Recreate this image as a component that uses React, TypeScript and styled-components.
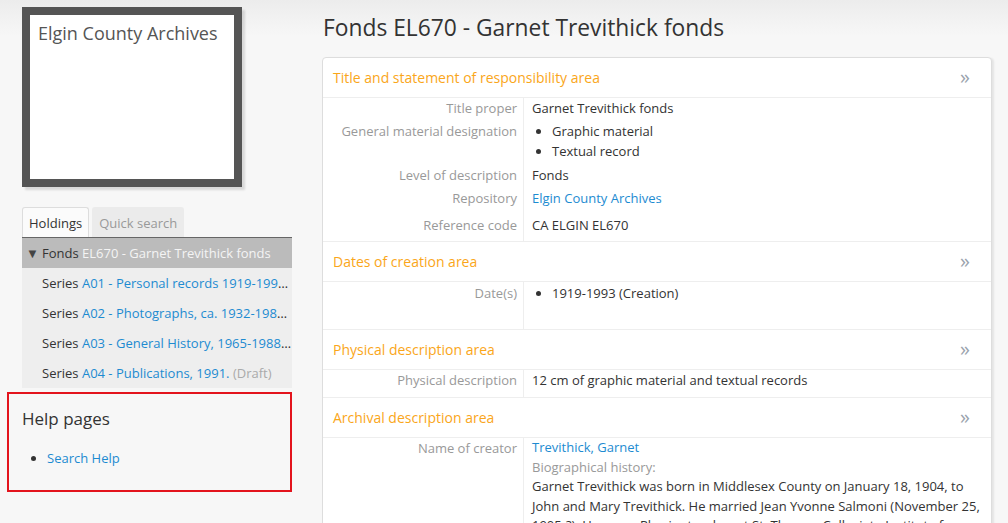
import React from 'react';
import styled, { createGlobalStyle } from 'styled-components';

const GlobalStyle = createGlobalStyle`
    html, body {
        margin: 0;
        padding: 0;
    }
    body {
        background: linear-gradient(#ececec 0, #f7f7f7 36px, #f7f7f7 100%);
        font-family: 'Open Sans', 'Liberation Sans', sans-serif;
        font-size: 13px;
        line-height: 20px;
        color: #333;
        min-height: 523px;
        overflow: hidden;
    }
    a {
        color: #1d8bd1;
        text-decoration: none;
    }
`;

const Page = styled.div`
    display: flex;
    align-items: flex-start;
    gap: 30px;
    padding: 7px 0 0 7px;
`;

const Sidebar = styled.aside`
    width: 285px;
    flex-shrink: 0;
    display: flex;
    flex-direction: column;
`;

const LogoBox = styled.div`
    margin-left: 15px;
    width: 188px;
    height: 150px;
    border: 8px solid #555;
    background: #fff;
    box-shadow: 3px 3px 2px rgba(0, 0, 0, 0.12);
    padding: 6px 8px 8px;
    box-sizing: content-box;
    font-size: 18px;
    line-height: 24px;
    color: #555;
`;

const Tabs = styled.div`
    margin: 20px 0 0 15px;
    display: flex;
    gap: 3px;
    height: 30px;
`;

const Tab = styled.div<{ $active?: boolean }>`
    display: flex;
    align-items: center;
    padding: 0 6px;
    border: 1px solid ${p => (p.$active ? '#ddd' : 'transparent')};
    border-bottom: none;
    border-radius: 3px 3px 0 0;
    background: ${p => (p.$active ? '#fbfbfb' : '#ebebeb')};
    color: ${p => (p.$active ? '#333' : '#999')};
`;

const Tree = styled.ul`
    margin: 0 0 0 15px;
    padding: 0;
    list-style: none;
    width: 270px;
    border-top: 1px solid #666;
`;

const TreeRow = styled.li<{ $current?: boolean }>`
    height: 30px;
    line-height: 30px;
    padding: 0 0 0 ${p => (p.$current ? '4px' : '20px')};
    background: ${p => (p.$current ? '#bbb' : '#eee')};
    white-space: nowrap;
    overflow: hidden;
    text-overflow: ellipsis;
    box-sizing: border-box;
`;

const Caret = styled.span`
    display: inline-block;
    width: 16px;
    font-size: 13px;
    color: #444;
`;

const CurrentTitle = styled.span`
    color: #f4f4f4;
`;

const Draft = styled.span`
    color: #aaa;
`;

const HelpBox = styled.section`
    margin-top: 4px;
    border: 2px solid #e3141d;
    height: 96px;
    padding: 0 13px;
`;

const HelpTitle = styled.h3`
    margin: 13px 0 0 0;
    font-size: 17px;
    font-weight: 400;
    line-height: 24px;
    color: #333;
`;

const HelpList = styled.ul`
    margin: 17px 0 0 0;
    padding-left: 25px;
`;

const Main = styled.main`
    width: 670px;
    flex-shrink: 0;
`;

const PageTitle = styled.h1`
    margin: 6px 0 0 1px;
    font-size: 22.8px;
    font-weight: 400;
    line-height: 30px;
    color: #333;
`;

const Card = styled.div`
    margin-top: 14px;
    background: #fff;
    border: 1px solid #ddd;
    border-radius: 4px 4px 0 0;
    box-shadow: 2px 1px 2px rgba(0, 0, 0, 0.08);
`;

const SectionHeader = styled.div`
    display: flex;
    justify-content: space-between;
    align-items: center;
    height: 39px;
    padding: 0 21px 0 10px;
    border-bottom: 1px solid #eee;
    color: #faa61a;
    font-size: 14px;
`;

const Chevron = styled.span`
    color: #9aa3ad;
    font-size: 20px;
    line-height: 20px;
    margin-top: -2px;
`;

const Fields = styled.div<{ $padBottom: number }>`
    display: grid;
    grid-template-columns: 200px 1fr;
    border-bottom: 1px solid #eee;
    & > div:nth-last-child(-n + 2) {
        padding-bottom: ${p => p.$padBottom}px;
    }
`;

const Label = styled.div<{ $top?: number }>`
    text-align: right;
    padding: ${p => p.$top ?? 0}px 6px 3px 0;
    color: #999;
`;

const Value = styled.div<{ $top?: number }>`
    padding: ${p => p.$top ?? 0}px 8px 3px 8px;
    border-left: 1px solid #eee;
`;

const Bullets = styled.ul`
    margin: 0;
    padding-left: 20px;
`;

const Bio = styled.div`
    line-height: 19.5px;
`;

const Muted = styled.div`
    color: #999;
`;

const Section: React.FC<{ title: string; pad: number; children: React.ReactNode }> = ({
    title,
    pad,
    children,
}) => (
    <>
        <SectionHeader>
            <span>{title}</span>
            <Chevron>»</Chevron>
        </SectionHeader>
        <Fields $padBottom={pad}>{children}</Fields>
    </>
);

const series = [
    { code: 'A01 - Personal records 1919-1993, predominant 1930-1980' },
    { code: 'A02 - Photographs, ca. 1932-1988, predominant 1940-1970' },
    { code: 'A03 - General History, 1965-1988, 1991' },
];

export default function App() {
    return (
        <>
            <GlobalStyle />
            <Page>
                <Sidebar>
                    <LogoBox>Elgin County Archives</LogoBox>
                    <Tabs>
                        <Tab $active>Holdings</Tab>
                        <Tab>Quick search</Tab>
                    </Tabs>
                    <Tree>
                        <TreeRow $current>
                            <Caret>▼</Caret>Fonds <CurrentTitle>EL670 - Garnet Trevithick fonds</CurrentTitle>
                        </TreeRow>
                        {series.map(s => (
                            <TreeRow key={s.code}>
                                Series <a href="#">{s.code}</a>
                            </TreeRow>
                        ))}
                        <TreeRow>
                            Series <a href="#">A04 - Publications, 1991.</a> <Draft>(Draft)</Draft>
                        </TreeRow>
                    </Tree>
                    <HelpBox>
                        <HelpTitle>Help pages</HelpTitle>
                        <HelpList>
                            <li>
                                <a href="#">Search Help</a>
                            </li>
                        </HelpList>
                    </HelpBox>
                </Sidebar>
                <Main>
                    <PageTitle>Fonds EL670 - Garnet Trevithick fonds</PageTitle>
                    <Card>
                        <Section title="Title and statement of responsibility area" pad={6}>
                            <Label>Title proper</Label>
                            <Value>Garnet Trevithick fonds</Value>
                            <Label>General material designation</Label>
                            <Value>
                                <Bullets>
                                    <li>Graphic material</li>
                                    <li>Textual record</li>
                                </Bullets>
                            </Value>
                            <Label $top={1}>Level of description</Label>
                            <Value $top={1}>Fonds</Value>
                            <Label>Repository</Label>
                            <Value>
                                <a href="#">Elgin County Archives</a>
                            </Value>
                            <Label $top={4}>Reference code</Label>
                            <Value $top={4}>CA ELGIN EL670</Value>
                        </Section>
                        <Section title="Dates of creation area" pad={26}>
                            <Label $top={1}>Date(s)</Label>
                            <Value $top={1}>
                                <Bullets>
                                    <li>1919-1993 (Creation)</li>
                                </Bullets>
                            </Value>
                        </Section>
                        <Section title="Physical description area" pad={7}>
                            <Label $top={0}>Physical description</Label>
                            <Value $top={0}>12 cm of graphic material and textual records</Value>
                        </Section>
                        <Section title="Archival description area" pad={20}>
                            <Label $top={0}>Name of creator</Label>
                            <Value $top={0}>
                                <Bio>
                                    <a href="#">Trevithick, Garnet</a>
                                    <Muted>Biographical history:</Muted>
                                    <div>
                                        Garnet Trevithick was born in Middlesex County on January 18, 1904, to
                                        John and Mary Trevithick. He married Jean Yvonne Salmoni (November 25,
                                        1905-?). He was a Physics teacher at St. Thomas Collegiate Institute for
                                        many years.
                                    </div>
                                </Bio>
                            </Value>
                        </Section>
                    </Card>
                </Main>
            </Page>
        </>
    );
}
